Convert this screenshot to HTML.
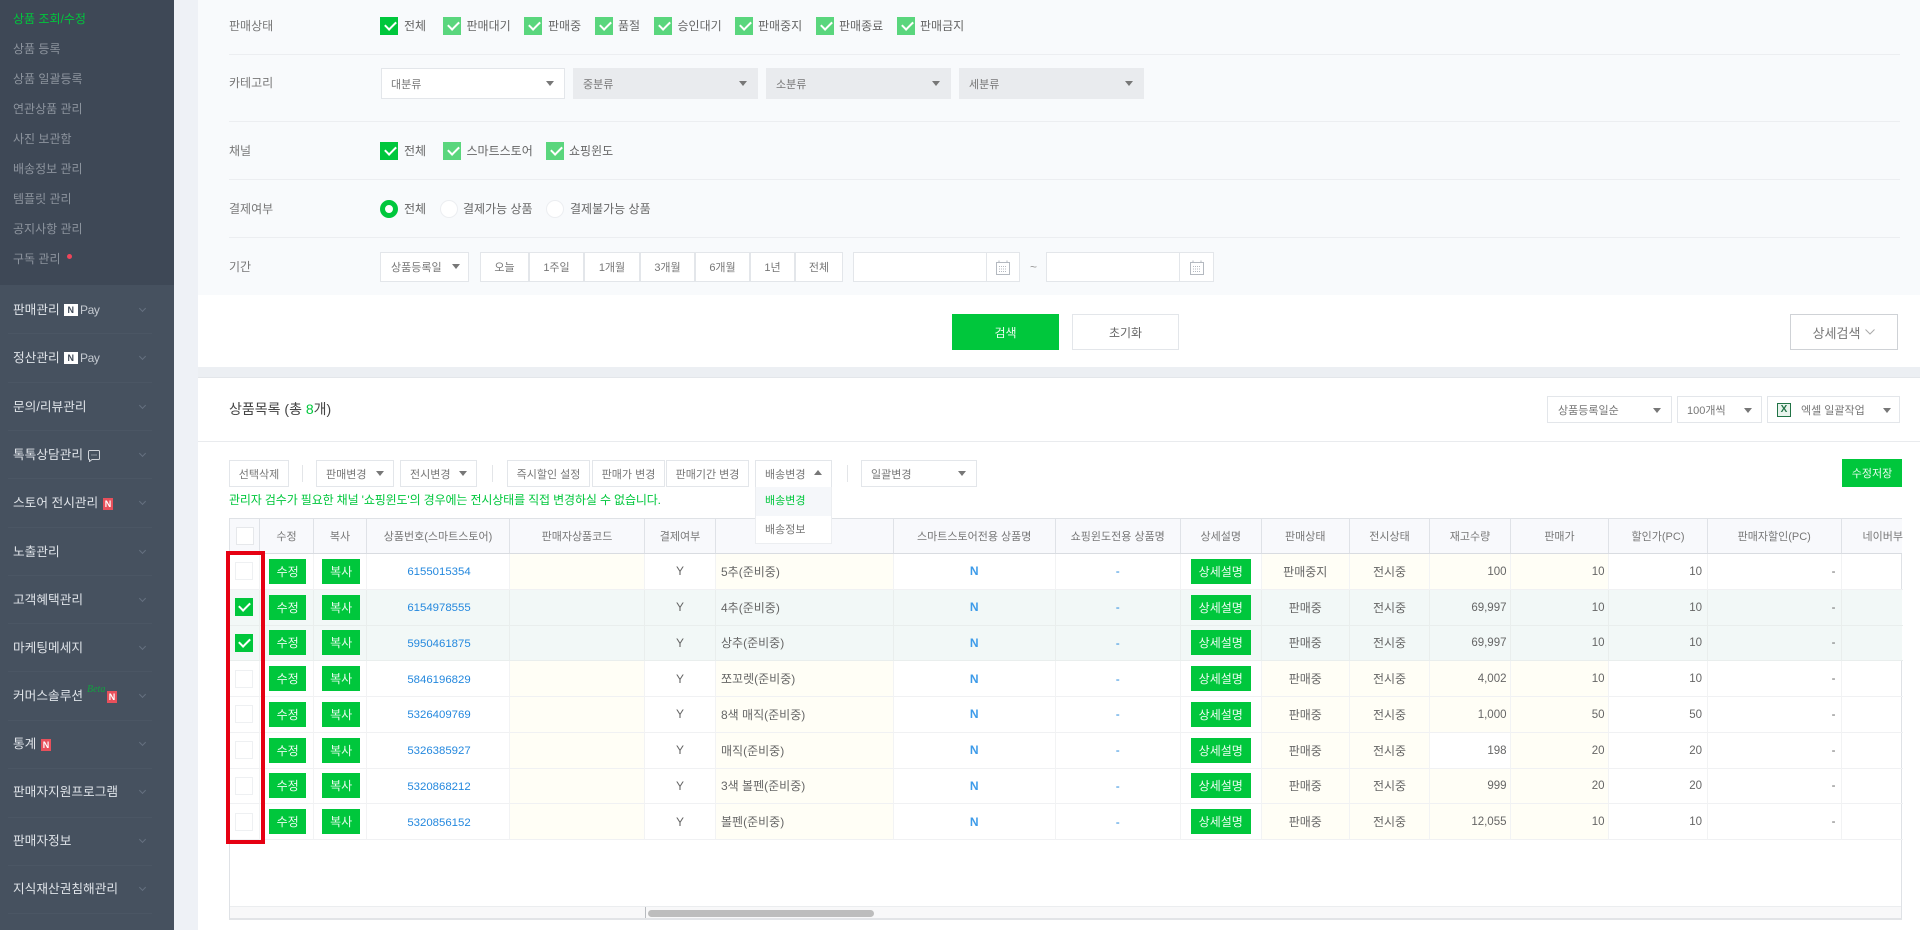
<!DOCTYPE html>
<html lang="ko"><head><meta charset="utf-8"><title>상품 조회/수정</title>
<style>
*{box-sizing:border-box;margin:0;padding:0}
html,body{width:1920px;height:930px;overflow:hidden;background:#eef1f6}
body{position:relative;font-family:"Liberation Sans","Noto Sans CJK KR",sans-serif;font-size:12px;color:#666;filter:blur(.3px)}
.abs,.t,.b,.c,.a,.rd{position:absolute}
.t{line-height:16px;white-space:nowrap}
.b{background:#fff;border:1px solid #e3e6ea;display:flex;align-items:center;justify-content:center;color:#777;white-space:nowrap;font-size:11px}
.s{justify-content:flex-start;padding-left:9px}
.g{background:#e9ebee;border-color:#e9ebee}
.a{width:0;height:0;border-left:4.5px solid transparent;border-right:4.5px solid transparent;border-top:5px solid #777}
.c{width:18px;height:18px;background:#00c73c}
.c.l{background:#5ad67d}
.c::after{content:"";position:absolute;left:4.500px;top:4px;width:9px;height:5px;border-left:2px solid #fff;border-bottom:2px solid #fff;transform:rotate(-45deg)}
.rd{width:18px;height:18px;border-radius:50%;background:#fff;border:1px solid #eceef1}
.m{color:#8d949e;left:13px}
.M{color:#dfe3e8;left:13px;font-size:12.7px}
.sep{position:absolute;left:8px;width:144px;height:1px;background:#4b5664}
.ch{position:absolute;left:140px;width:5px;height:5px;border-right:1px solid #667180;border-bottom:1px solid #667180;transform:rotate(45deg)}
.rule{position:absolute;left:229px;width:1671px;height:1px;background:#eceef1}
.N{position:absolute;width:13.5px;height:12px;background:#fff;color:#3e4856;font-size:9px;font-weight:700;text-align:center;line-height:12px}
.pay{position:absolute;color:#c5cad1;font-size:12px;line-height:14px;letter-spacing:-.4px}
.n{position:absolute;width:10px;height:12px;background:#e8505b;color:#fff;font-size:9px;font-weight:700;text-align:center;line-height:12px}
.row,.head{position:absolute;left:230px;width:1672px;display:grid;grid-template-columns:30px 54px 53px 143px 135px 71px 178px 161.5px 125.5px 80.5px 88.5px 80px 81px 98px 99px 133.5px 61.5px}
.row{height:35.75px}
.head{top:519px;height:35px;background:#f8f9fc;border-bottom:1px solid #d9dce1;font-size:11px}
.head div{display:flex;align-items:center;justify-content:center;border-right:1px solid #dfe2e7;color:#777;white-space:nowrap;overflow:hidden}
.row>div{display:flex;align-items:center;justify-content:center;border-right:1px solid #f2f3f4;border-bottom:1px solid #f0f1f3;position:relative;white-space:nowrap}
.row .y{background:#fffef6}
.row.sel{background:#f2f8f7}
.row.sel>div{border-color:#e9eeed}
.row.sel .y{background:transparent}
.row .l{justify-content:flex-start;padding-left:5px}
.row .r{justify-content:flex-end;padding-right:5px;padding-top:1px;font-size:11.5px}
.row .r.y{padding-right:3.5px}
.gb{background:#00c73c;color:#e9fbef;width:37.5px;height:25px;display:flex;align-items:center;justify-content:center;position:relative;left:1.2px}
.bl{color:#2488de}
.bl b{color:#3d9be9}
.num{font-size:11.4px;left:1px;top:1px;position:relative}
.cb{width:18px;height:18px;background:#fff;border:1px solid #eef0f2;position:relative;left:-1px}
.cb.on{background:#00c73c;border:0}
.cb.on::after{content:"";position:absolute;left:4.500px;top:4px;width:9px;height:5px;border-left:2px solid #fff;border-bottom:2px solid #fff;transform:rotate(-45deg)}
</style></head><body>

<!-- sidebar -->
<div class="abs" style="left:0;top:0;width:174px;height:930px;background:#46515f"></div>
<div class="abs" style="left:0;top:0;width:174px;height:285px;background:#3e4856"></div>
<div class="t m" style="top:11px;color:#00c73c">상품 조회/수정</div>
<div class="t m" style="top:41px">상품 등록</div>
<div class="t m" style="top:71px">상품 일괄등록</div>
<div class="t m" style="top:101px">연관상품 관리</div>
<div class="t m" style="top:131px">사진 보관함</div>
<div class="t m" style="top:161px">배송정보 관리</div>
<div class="t m" style="top:191px">템플릿 관리</div>
<div class="t m" style="top:221px">공지사항 관리</div>
<div class="t m" style="top:251px">구독 관리</div>
<div class="abs" style="left:67px;top:254px;width:5px;height:5px;border-radius:50%;background:#f0455a"></div>

<div class="t M" style="top:302px">판매관리</div><div class="N" style="left:64px;top:304px">N</div><div class="pay" style="left:80px;top:303px">Pay</div>
<div class="t M" style="top:350px">정산관리</div><div class="N" style="left:64px;top:352px">N</div><div class="pay" style="left:80px;top:351px">Pay</div>
<div class="t M" style="top:399px">문의/리뷰관리</div>
<div class="t M" style="top:447px">톡톡상담관리</div>
<svg class="abs" style="left:88px;top:449px" width="12" height="13" viewBox="0 0 12 13" fill="none" stroke="#cfd3d9"><path d="M1.5 1.500h9a1 1 0 0 1 1 1v7a1 1 0 0 1-1 1H4l-2.500 2v-2a1 1 0 0 1-1-1v-7a1 1 0 0 1 1-1z"/><path d="M3.500 6h1M5.500 6h1M7.500 6h1"/></svg>
<div class="t M" style="top:495px">스토어 전시관리</div><div class="n" style="left:103px;top:498px">N</div>
<div class="t M" style="top:544px">노출관리</div>
<div class="t M" style="top:592px">고객혜택관리</div>
<div class="t M" style="top:640px">마케팅메세지</div>
<div class="t M" style="top:688px">커머스솔루션</div>
<div class="t" style="left:87px;top:684px;font:italic 10px 'Liberation Serif',serif;color:#12a140;line-height:12px">Beta</div><div class="n" style="left:107px;top:691px">N</div>
<div class="t M" style="top:736px">통계</div><div class="n" style="left:41px;top:739px">N</div>
<div class="t M" style="top:784px">판매자지원프로그램</div>
<div class="t M" style="top:833px">판매자정보</div>
<div class="t M" style="top:881px">지식재산권침해관리</div>

<div class="sep" style="top:333px"></div><div class="sep" style="top:382px"></div><div class="sep" style="top:430px"></div><div class="sep" style="top:478px"></div><div class="sep" style="top:527px"></div><div class="sep" style="top:575px"></div><div class="sep" style="top:623px"></div><div class="sep" style="top:671px"></div><div class="sep" style="top:720px"></div><div class="sep" style="top:768px"></div><div class="sep" style="top:817px"></div><div class="sep" style="top:865px"></div><div class="sep" style="top:913px"></div>
<div class="ch" style="top:306px"></div><div class="ch" style="top:354px"></div><div class="ch" style="top:403px"></div><div class="ch" style="top:451px"></div><div class="ch" style="top:499px"></div><div class="ch" style="top:548px"></div><div class="ch" style="top:596px"></div><div class="ch" style="top:644px"></div><div class="ch" style="top:692px"></div><div class="ch" style="top:740px"></div><div class="ch" style="top:788px"></div><div class="ch" style="top:837px"></div><div class="ch" style="top:885px"></div>

<!-- search panel -->
<div class="abs" style="left:198px;top:0;width:1722px;height:367px;background:#fff"></div>
<div class="abs" style="left:198px;top:0;width:1722px;height:295px;background:#f8fafc"></div>
<div class="rule" style="top:54px"></div><div class="rule" style="top:121px"></div><div class="rule" style="top:179px"></div><div class="rule" style="top:237px"></div>

<div class="t" style="left:229px;top:18px;color:#777">판매상태</div>
<div class="c" style="left:380px;top:16.500px"></div><div class="t" style="left:404px;top:18px">전체</div>
<div class="c l" style="left:443px;top:16.500px"></div><div class="t" style="left:466.500px;top:18px">판매대기</div>
<div class="c l" style="left:524px;top:16.500px"></div><div class="t" style="left:548px;top:18px">판매중</div>
<div class="c l" style="left:595px;top:16.500px"></div><div class="t" style="left:618px;top:18px">품절</div>
<div class="c l" style="left:654px;top:16.500px"></div><div class="t" style="left:677.500px;top:18px">승인대기</div>
<div class="c l" style="left:735px;top:16.500px"></div><div class="t" style="left:758px;top:18px">판매중지</div>
<div class="c l" style="left:816px;top:16.500px"></div><div class="t" style="left:839px;top:18px">판매종료</div>
<div class="c l" style="left:897px;top:16.500px"></div><div class="t" style="left:920px;top:18px">판매금지</div>

<div class="t" style="left:229px;top:75px;color:#777">카테고리</div>
<div class="b s" style="left:381px;top:68px;width:184px;height:31px">대분류</div><div class="a" style="left:546px;top:81px"></div>
<div class="b s g" style="left:573px;top:68px;width:185px;height:31px">중분류</div><div class="a" style="left:739px;top:81px"></div>
<div class="b s g" style="left:766px;top:68px;width:185px;height:31px">소분류</div><div class="a" style="left:932px;top:81px"></div>
<div class="b s g" style="left:959px;top:68px;width:185px;height:31px">세분류</div><div class="a" style="left:1125px;top:81px"></div>

<div class="t" style="left:229px;top:143px;color:#777">채널</div>
<div class="c" style="left:380px;top:142px"></div><div class="t" style="left:404px;top:143px">전체</div>
<div class="c l" style="left:443px;top:142px"></div><div class="t" style="left:466.500px;top:143px">스마트스토어</div>
<div class="c l" style="left:546px;top:142px"></div><div class="t" style="left:569px;top:143px">쇼핑윈도</div>

<div class="t" style="left:229px;top:201px;color:#777">결제여부</div>
<div class="abs" style="left:380px;top:200px;width:18px;height:18px;border-radius:50%;border:5px solid #00c73c;background:#fff"></div><div class="t" style="left:404px;top:201px">전체</div>
<div class="rd" style="left:440px;top:200px"></div><div class="t" style="left:463px;top:201px">결제가능 상품</div>
<div class="rd" style="left:546px;top:200px"></div><div class="t" style="left:570px;top:201px">결제불가능 상품</div>

<div class="t" style="left:229px;top:259px;color:#777">기간</div>
<div class="b s" style="left:380px;top:252px;width:89px;height:30px;padding-left:10px">상품등록일</div><div class="a" style="left:452px;top:264px"></div>
<div class="b" style="left:480px;top:252px;width:49px;height:30px">오늘</div>
<div class="b" style="left:529px;top:252px;width:55px;height:30px">1주일</div>
<div class="b" style="left:584px;top:252px;width:56px;height:30px">1개월</div>
<div class="b" style="left:640px;top:252px;width:55px;height:30px">3개월</div>
<div class="b" style="left:695px;top:252px;width:55px;height:30px">6개월</div>
<div class="b" style="left:750px;top:252px;width:45px;height:30px">1년</div>
<div class="b" style="left:795px;top:252px;width:48px;height:30px">전체</div>
<div class="b" style="left:853px;top:252px;width:134px;height:30px"></div>
<div class="b" style="left:986px;top:252px;width:34px;height:30px"></div>
<svg class="abs" style="left:996px;top:260px" width="14" height="15" viewBox="0 0 14 15" fill="none" stroke="#b4b9c0"><rect x=".5" y="2.500" width="13" height="12"/><path d="M3 .5v2M11 .5v2" /><path d="M3 6.500h8M3 9h8M3 11.500h8" stroke-width="1" stroke-dasharray="1 1"/></svg>
<div class="t" style="left:1030px;top:259px;color:#999">~</div>
<div class="b" style="left:1046px;top:252px;width:134px;height:30px"></div>
<div class="b" style="left:1179px;top:252px;width:35px;height:30px"></div>
<svg class="abs" style="left:1190px;top:260px" width="14" height="15" viewBox="0 0 14 15" fill="none" stroke="#b4b9c0"><rect x=".5" y="2.500" width="13" height="12"/><path d="M3 .5v2M11 .5v2"/><path d="M3 6.500h8M3 9h8M3 11.500h8" stroke-width="1" stroke-dasharray="1 1"/></svg>

<div class="abs" style="left:952px;top:314px;width:107px;height:36px;background:#00c73c;color:#eafbf0;font-size:12px;display:flex;align-items:center;justify-content:center">검색</div>
<div class="b" style="left:1072px;top:314px;width:107px;height:36px;font-size:12px;color:#666">초기화</div>
<div class="b" style="left:1790px;top:314px;width:108px;height:36px;font-size:13px;border-color:#cfd2d6;color:#777">상세검색 <svg width="10" height="6" viewBox="0 0 10 6" fill="none" stroke="#aaa" style="margin-left:5px"><path d="M.5.5 5 5l4.500-4.500"/></svg></div>

<!-- list panel -->
<div class="abs" style="left:198px;top:367px;width:1722px;height:11px;background:#eceff3;border-bottom:1px solid #e3e6ea"></div>
<div class="abs" style="left:198px;top:378px;width:1722px;height:552px;background:#fff"></div>
<div class="t" style="left:229px;top:401px;font-size:14px;color:#444">상품목록 (총 <span style="color:#00c73c">8</span>개)</div>
<div class="b s" style="left:1547px;top:396px;width:125px;height:27px;padding-left:10px">상품등록일순</div><div class="a" style="left:1653px;top:408px"></div>
<div class="b s" style="left:1677px;top:396px;width:85px;height:27px">100개씩</div><div class="a" style="left:1744px;top:408px"></div>
<div class="b s" style="left:1767px;top:396px;width:133px;height:27px;padding-left:33px">엑셀 일괄작업</div><div class="a" style="left:1883px;top:408px"></div>
<div class="abs" style="left:1777px;top:403px;width:14px;height:14px;border:1.500px solid #217346;background:#e8f3ec;color:#217346;font-size:10px;font-weight:700;line-height:11px;text-align:center">X</div>
<div class="abs" style="left:198px;top:441px;width:1722px;height:1px;background:#e9ebee"></div>

<div class="b" style="left:229px;top:460px;width:60px;height:27px">선택삭제</div>
<div class="abs" style="left:302px;top:465px;width:1px;height:17px;background:#e3e5e8"></div>
<div class="b s" style="left:316px;top:460px;width:78px;height:27px">판매변경</div><div class="a" style="left:376px;top:471px"></div>
<div class="b s" style="left:400px;top:460px;width:77px;height:27px">전시변경</div><div class="a" style="left:459px;top:471px"></div>
<div class="abs" style="left:492px;top:465px;width:1px;height:17px;background:#e3e5e8"></div>
<div class="b" style="left:507px;top:460px;width:83px;height:27px">즉시할인 설정</div>
<div class="b" style="left:592px;top:460px;width:73px;height:27px">판매가 변경</div>
<div class="b" style="left:666px;top:460px;width:83px;height:27px">판매기간 변경</div>
<div class="abs" style="left:847px;top:465px;width:1px;height:17px;background:#e3e5e8"></div>
<div class="b s" style="left:861px;top:460px;width:116px;height:27px">일괄변경</div><div class="a" style="left:958px;top:471px"></div>
<div class="t" style="left:229px;top:492px;color:#00c73c;letter-spacing:-.14px">관리자 검수가 필요한 채널 '쇼핑윈도'의 경우에는 전시상태를 직접 변경하실 수 없습니다.</div>
<div class="abs" style="left:1842px;top:459px;width:60px;height:28px;background:#00c73c;color:#e9fbef;font-size:11px;display:flex;align-items:center;justify-content:center">수정저장</div>

<!-- table -->
<div class="abs" style="left:229px;top:518px;width:1673px;height:402px;border:1px solid #dfe2e6;border-bottom:2px solid #e2e4e7"></div>
<div class="head">
<div><span class="cb" style="display:block;left:0;border-color:#e6e8eb"></span></div><div>수정</div><div>복사</div><div>상품번호(스마트스토어)</div><div>판매자상품코드</div><div>결제여부</div><div>상품명</div><div>스마트스토어전용 상품명</div><div>쇼핑윈도전용 상품명</div><div>상세설명</div><div>판매상태</div><div>전시상태</div><div>재고수량</div><div>판매가</div><div>할인가(PC)</div><div>판매자할인(PC)</div><div style="justify-content:flex-start;padding-left:21px;border-right:0">네이버부가</div>
</div>

<div class="row" style="top:554px"><div><span class="cb"></span></div><div><span class="gb">수정</span></div><div><span class="gb">복사</span></div><div class="bl"><span class="num">6155015354</span></div><div class="y"></div><div>Y</div><div class="y l">5추(준비중)</div><div class="bl"><b>N</b></div><div class="bl">-</div><div><span class="gb" style="width:60px;left:0">상세설명</span></div><div class="y">판매중지</div><div class="y">전시중</div><div class="y r">100</div><div class="y r">10</div><div class="r">10</div><div class="r">-</div><div style="border-right:0"></div></div>
<div class="row sel" style="top:589.75px"><div><span class="cb on"></span></div><div><span class="gb">수정</span></div><div><span class="gb">복사</span></div><div class="bl"><span class="num">6154978555</span></div><div class="y"></div><div>Y</div><div class="y l">4추(준비중)</div><div class="bl"><b>N</b></div><div class="bl">-</div><div><span class="gb" style="width:60px;left:0">상세설명</span></div><div class="y">판매중</div><div class="y">전시중</div><div class="y r">69,997</div><div class="y r">10</div><div class="r">10</div><div class="r">-</div><div style="border-right:0"></div></div>
<div class="row sel" style="top:625.5px"><div><span class="cb on"></span></div><div><span class="gb">수정</span></div><div><span class="gb">복사</span></div><div class="bl"><span class="num">5950461875</span></div><div class="y"></div><div>Y</div><div class="y l">상추(준비중)</div><div class="bl"><b>N</b></div><div class="bl">-</div><div><span class="gb" style="width:60px;left:0">상세설명</span></div><div class="y">판매중</div><div class="y">전시중</div><div class="y r">69,997</div><div class="y r">10</div><div class="r">10</div><div class="r">-</div><div style="border-right:0"></div></div>
<div class="row" style="top:661.25px"><div><span class="cb"></span></div><div><span class="gb">수정</span></div><div><span class="gb">복사</span></div><div class="bl"><span class="num">5846196829</span></div><div class="y"></div><div>Y</div><div class="y l">쪼꼬렛(준비중)</div><div class="bl"><b>N</b></div><div class="bl">-</div><div><span class="gb" style="width:60px;left:0">상세설명</span></div><div class="y">판매중</div><div class="y">전시중</div><div class="y r">4,002</div><div class="y r">10</div><div class="r">10</div><div class="r">-</div><div style="border-right:0"></div></div>
<div class="row" style="top:697px"><div><span class="cb"></span></div><div><span class="gb">수정</span></div><div><span class="gb">복사</span></div><div class="bl"><span class="num">5326409769</span></div><div class="y"></div><div>Y</div><div class="y l">8색 매직(준비중)</div><div class="bl"><b>N</b></div><div class="bl">-</div><div><span class="gb" style="width:60px;left:0">상세설명</span></div><div class="y">판매중</div><div class="y">전시중</div><div class="y r">1,000</div><div class="y r">50</div><div class="r">50</div><div class="r">-</div><div style="border-right:0"></div></div>
<div class="row" style="top:732.75px"><div><span class="cb"></span></div><div><span class="gb">수정</span></div><div><span class="gb">복사</span></div><div class="bl"><span class="num">5326385927</span></div><div class="y"></div><div>Y</div><div class="y l">매직(준비중)</div><div class="bl"><b>N</b></div><div class="bl">-</div><div><span class="gb" style="width:60px;left:0">상세설명</span></div><div class="y">판매중</div><div class="y">전시중</div><div class="r" style="padding-right:3.5px">198</div><div class="y r">20</div><div class="r">20</div><div class="r">-</div><div style="border-right:0"></div></div>
<div class="row" style="top:768.5px"><div><span class="cb"></span></div><div><span class="gb">수정</span></div><div><span class="gb">복사</span></div><div class="bl"><span class="num">5320868212</span></div><div class="y"></div><div>Y</div><div class="y l">3색 볼펜(준비중)</div><div class="bl"><b>N</b></div><div class="bl">-</div><div><span class="gb" style="width:60px;left:0">상세설명</span></div><div class="y">판매중</div><div class="y">전시중</div><div class="y r">999</div><div class="y r">20</div><div class="r">20</div><div class="r">-</div><div style="border-right:0"></div></div>
<div class="row" style="top:804.25px"><div><span class="cb"></span></div><div><span class="gb">수정</span></div><div><span class="gb">복사</span></div><div class="bl"><span class="num">5320856152</span></div><div class="y"></div><div>Y</div><div class="y l">볼펜(준비중)</div><div class="bl"><b>N</b></div><div class="bl">-</div><div><span class="gb" style="width:60px;left:0">상세설명</span></div><div class="y">판매중</div><div class="y">전시중</div><div class="y r">12,055</div><div class="y r">10</div><div class="r">10</div><div class="r">-</div><div style="border-right:0"></div></div>

<!-- scrollbar -->
<div class="abs" style="left:230px;top:906px;width:1671px;height:12px;background:#f8f8f9;border-top:1px solid #ebedef"></div>
<div class="abs" style="left:645px;top:907px;width:1px;height:11px;background:#b9bcc0"></div>
<div class="abs" style="left:648px;top:910px;width:226px;height:7px;border-radius:4px;background:#bdbdbd"></div>

<!-- red highlight -->
<div class="abs" style="left:226px;top:551px;width:38.500px;height:293px;border:4px solid #e60012"></div>

<!-- dropdown -->
<div class="b s" style="left:755px;top:460px;width:77px;height:27px;border-bottom:0">배송변경</div>
<div class="a" style="left:814px;top:470px;border-top:0;border-bottom:5px solid #777"></div>
<div class="abs" style="left:755px;top:487px;width:77px;height:57px;background:#fff;border:1px solid #eceef1;border-top:0;font-size:11px">
<div style="height:29px;line-height:29px;padding-left:9px;background:#f5f7fa;color:#00c73c">배송변경</div>
<div style="height:28px;line-height:28px;padding-left:9px;color:#777">배송정보</div>
</div>
</body></html>
